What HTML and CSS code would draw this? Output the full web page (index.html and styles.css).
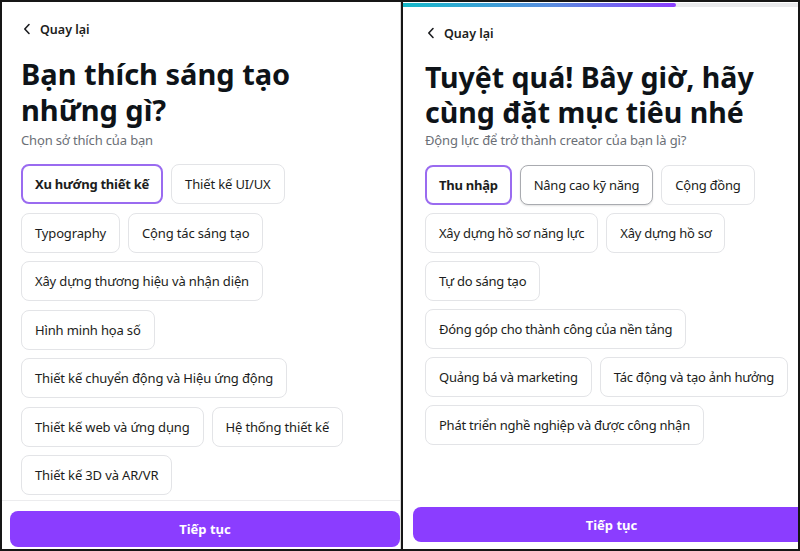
FILE: index.html
```html
<!DOCTYPE html>
<html lang="vi">
<head>
<meta charset="utf-8">
<title>Onboarding</title>
<link rel="stylesheet" href="styles.css">
</head>
<body>
<div class="frame">
  <section class="panel panel-left">
    <div class="body">
      <a class="back" href="#"><svg width="8" height="12" viewBox="0 0 8 12"><path d="M6 1.5 1.8 6 6 10.5" fill="none" stroke="#1c1d20" stroke-width="1.6" stroke-linecap="round" stroke-linejoin="round"/></svg><span>Quay lại</span></a>
      <h1 class="title">Bạn thích sáng tạo<br>những gì?</h1>
      <p class="sub">Chọn sở thích của bạn</p>
      <div class="chips">
        <button class="chip selected">Xu hướng thiết kế</button>
        <button class="chip">Thiết kế UI/UX</button>
        <button class="chip">Typography</button>
        <button class="chip">Cộng tác sáng tạo</button>
        <button class="chip">Xây dựng thương hiệu và nhận diện</button>
        <button class="chip">Hình minh họa số</button>
        <button class="chip">Thiết kế chuyển động và Hiệu ứng động</button>
        <button class="chip">Thiết kế web và ứng dụng</button>
        <button class="chip">Hệ thống thiết kế</button>
        <button class="chip">Thiết kế 3D và AR/VR</button>
      </div>
    </div>
    <div class="footer">
      <button class="cta">Tiếp tục</button>
    </div>
  </section>
  <div class="divider"></div>
  <section class="panel panel-right">
    <div class="progress"><div class="progress-fill" style="width:69%"></div></div>
    <div class="body">
      <a class="back" href="#"><svg width="8" height="12" viewBox="0 0 8 12"><path d="M6 1.5 1.8 6 6 10.5" fill="none" stroke="#1c1d20" stroke-width="1.6" stroke-linecap="round" stroke-linejoin="round"/></svg><span>Quay lại</span></a>
      <h1 class="title">Tuyệt quá! Bây giờ, hãy<br>cùng đặt mục tiêu nhé</h1>
      <p class="sub">Động lực để trở thành creator của bạn là gì?</p>
      <div class="chips">
        <button class="chip selected">Thu nhập</button>
        <button class="chip hover">Nâng cao kỹ năng</button>
        <button class="chip">Cộng đồng</button>
        <button class="chip">Xây dựng hồ sơ năng lực</button>
        <button class="chip">Xây dựng hồ sơ</button>
        <button class="chip">Tự do sáng tạo</button>
        <button class="chip">Đóng góp cho thành công của nền tảng</button>
        <button class="chip">Quảng bá và marketing</button>
        <button class="chip">Tác động và tạo ảnh hưởng</button>
        <button class="chip">Phát triển nghề nghiệp và được công nhận</button>
      </div>
    </div>
    <div class="footer">
      <button class="cta">Tiếp tục</button>
    </div>
  </section>
</div>
</body>
</html>
```

FILE: styles.css
```css
* { box-sizing: border-box; }
html, body { margin: 0; padding: 0; background: #fff; }
body { font-family: "Noto Sans", "Open Sans", sans-serif; color: #0e1318; }

.frame {
  width: 800px;
  height: 551px;
  border: 2px solid #161616;
  display: flex;
  overflow: hidden;
}

.panel {
  display: flex;
  flex-direction: column;
  background: #fff;
  overflow: hidden;
}
.panel-left { width: 399px; border-right: 1px solid #d9d9d9; }
.divider { width: 2px; background: #161616; }
.panel-right { flex: 1; }

.body { flex: 1; overflow: hidden; }
.panel-left .body { padding: 16px 0 0 19px; }
.panel-right .body { padding: 15px 0 0 22px; }

.progress {
  height: 4px;
  margin: 1px 0 0 0;
  background: #e9eaec;
}
.progress-fill {
  height: 100%;
  background: linear-gradient(90deg, #16b9c9, #5a8cdf 55%, #8b3dff);
  border-radius: 0 2px 2px 0;
}

.back {
  display: inline-flex;
  align-items: center;
  gap: 9px;
  height: 20px;
  font-size: 12.5px;
  font-weight: 600;
  color: #1c1d20;
  text-decoration: none;
  padding-left: 2px;
}

.title {
  margin: 16px 0 0;
  font-size: 29px;
  line-height: 36px;
  font-weight: 700;
  color: #0e1318;
}
.panel-right .title { font-size: 28.5px; line-height: 35px; margin-top: 16px; }

.sub {
  margin: 3px 0 0;
  font-size: 13px;
  letter-spacing: -0.15px;
  line-height: 18px;
  color: #6b6f76;
}
.panel-right .sub { margin-top: 1px; }

.chips {
  display: flex;
  flex-wrap: wrap;
  gap: 8px;
  margin-top: 15px;
}
.panel-left .chips { max-width: 345px; row-gap: 8.5px; }
.panel-right .chips { margin-top: 16px; }

.chip {
  height: 40px;
  padding: 0 13px;
  border: 1px solid #e3e4e7;
  border-radius: 8px;
  background: #fff;
  font-family: inherit;
  font-size: 13px;
  letter-spacing: -0.15px;
  color: #1c1d20;
  cursor: pointer;
}
.panel-right .chip { letter-spacing: -0.25px; }
.chip.selected {
  border: 2px solid #9a6bf0;
  padding: 0 12px;
  font-weight: 700;
  letter-spacing: -0.25px;
}
.chip.hover {
  border-color: #a9abb0;
  box-shadow: 0 1px 2px rgba(0,0,0,0.12);
}

.footer { flex: none; }
.panel-left .footer {
  height: 49px;
  border-top: 1px solid #ececee;
  padding: 10px 0 2px 8px;
}
.panel-right .footer {
  height: 51px;
  padding: 9px 0 7px 10px;
}

.cta {
  width: 100%;
  height: 36px;
  border: 0;
  border-radius: 8px;
  background: #8b3dff;
  color: #fff;
  font-family: inherit;
  font-size: 13px;
  font-weight: 700;
}
.panel-right .cta { width: calc(100% + 12px); height: 35px; }
```
